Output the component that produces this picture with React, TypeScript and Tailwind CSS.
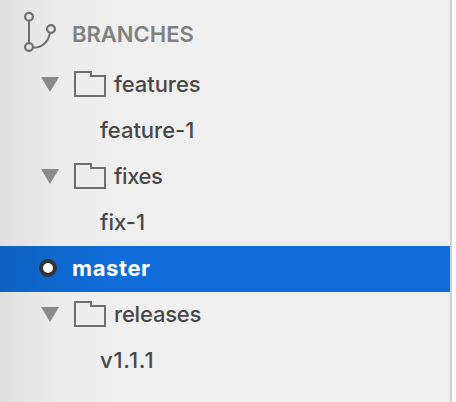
type Item = { name: string; kind: 'folder' | 'leaf' | 'current'; spacing: string };

const items: Item[] = [
  { name: 'features', kind: 'folder', spacing: 'tracking-[-0.05px]' },
  { name: 'feature-1', kind: 'leaf', spacing: 'tracking-[0px]' },
  { name: 'fixes', kind: 'folder', spacing: 'tracking-[-0.4px]' },
  { name: 'fix-1', kind: 'leaf', spacing: 'tracking-[0px]' },
  { name: 'master', kind: 'current', spacing: 'tracking-[0.6px]' },
  { name: 'releases', kind: 'folder', spacing: 'tracking-[-0.2px]' },
  { name: 'v1.1.1', kind: 'leaf', spacing: 'tracking-[0.8px]' },
];

function BranchIcon() {
  return (
    <svg className="block shrink-0" width="34" height="42" viewBox="0 0 34 42" fill="none" stroke="#6f6f6f" strokeWidth="2.2">
      <circle cx="6" cy="5.8" r="3.9" />
      <circle cx="6" cy="36" r="3.9" />
      <circle cx="28" cy="18" r="3.9" />
      <path d="M6 10V32M10 36.5C18 37 25 32 27 22" strokeWidth="2" />
    </svg>
  );
}

function Disclosure() {
  return (
    <svg className="mt-[15px] block shrink-0" width="18" height="15" viewBox="0 0 18 15" fill="#8a8a8a">
      <path d="M0 0H18L9 15Z" />
    </svg>
  );
}

function FolderIcon() {
  return (
    <svg className="mt-[9px] ml-[15px] block shrink-0" width="32" height="26" viewBox="0 0 32 26" fill="none" stroke="#6f6f6f" strokeWidth="2">
      <path d="M1 1H17V5H31V25H1Z" />
    </svg>
  );
}

function Row({ item }: { item: Item }) {
  if (item.kind === 'current') {
    return (
      <li className="flex h-[46px] items-start bg-gradient-to-r from-[#0f62c0] to-[#106cd8] to-[110px] pl-[39px] font-bold text-white">
        <span className="mt-[13px] mr-[15px] size-[18px] shrink-0 rounded-full border-4 border-[#333333] bg-white" />
        <span className={`leading-[44px] ${item.spacing}`}>{item.name}</span>
      </li>
    );
  }
  if (item.kind === 'leaf') {
    return (
      <li className="flex h-[46px] items-start pl-[100px]">
        <span className={`leading-[44px] ${item.spacing}`}>{item.name}</span>
      </li>
    );
  }
  return (
    <li className="flex h-[46px] items-start pl-[41px]">
      <Disclosure />
      <FolderIcon />
      <span className={`ml-2 leading-[44px] ${item.spacing}`}>{item.name}</span>
    </li>
  );
}

export default function App() {
  return (
    <div className="h-[402px] w-[456px] overflow-hidden bg-white font-['Inter','Liberation_Sans',sans-serif] text-[22px] font-medium text-[#484848]">
      <aside className="h-full w-[452px] border-r-2 border-[#d1d1d1] bg-gradient-to-r from-[#dfdfdf] via-[#ececec] via-[60px] to-[#efefef] to-[120px]">
        <header className="flex h-[62px] items-start pt-[11px] pl-[23px] text-[#808080]">
          <BranchIcon />
          <h2 className="ml-[15px] leading-[46px] font-semibold tracking-[0px]">BRANCHES</h2>
        </header>
        <ul>
          {items.map((item) => (
            <Row key={item.name} item={item} />
          ))}
        </ul>
      </aside>
    </div>
  );
}
